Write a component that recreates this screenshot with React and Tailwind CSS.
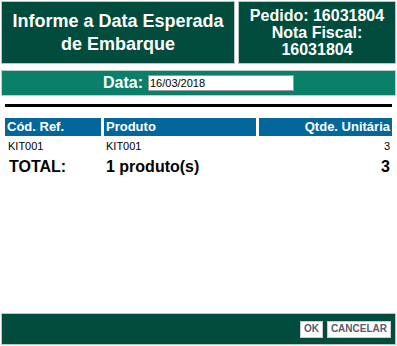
export default function App() {
  return (
    <div className="w-[397px] h-[346px] bg-white flex flex-col" style={{ fontFamily: '"Liberation Sans", Arial, sans-serif' }}>
      <div className="flex gap-[3px] px-[1px] pt-[1px]">
        <div className="w-[234px] h-[63px] bg-[#014c3c] border border-[#b9c7c2] flex items-center justify-center text-center text-white font-bold text-[18px] leading-[23px]">
          Informe a Data Esperada
          <br />
          de Embarque
        </div>
        <div className="flex-1 h-[63px] bg-[#014c3c] border border-[#b9c7c2] flex items-center justify-center text-center text-white font-bold text-[16px] leading-[17px]">
          Pedido: 16031804
          <br />
          Nota Fiscal:
          <br />
          16031804
        </div>
      </div>

      <div className="mt-[6px] mx-[1px] h-[26px] bg-[#0a806a] border border-[#b9d0c8] flex items-center justify-center gap-[5px]">
        <span className="text-white font-bold text-[16px]">Data:</span>
        <input
          defaultValue="16/03/2018"
          className="w-[146px] h-[16px] bg-white border border-[#999] px-[1px] text-[11px] text-black outline-none"
        />
      </div>

      <div className="mt-[8px] mx-[5px] h-[3px] bg-black" />

      <div className="mt-[11px] mx-[5px] flex gap-[3px] text-white font-bold text-[13px] h-[18px]">
        <div className="w-[96px] bg-[#04679b] px-[2px] flex items-center">Cód. Ref.</div>
        <div className="w-[152px] bg-[#04679b] px-[2px] flex items-center">Produto</div>
        <div className="flex-1 bg-[#04679b] px-[2px] flex items-center justify-end">Qtde. Unitária</div>
      </div>
      <div className="mx-[5px] flex gap-[3px] text-[11px] text-black h-[20px] items-center">
        <div className="w-[96px] px-[3px]">KIT001</div>
        <div className="w-[152px] px-[2px]">KIT001</div>
        <div className="flex-1 px-[2px] text-right">3</div>
      </div>
      <div className="mx-[5px] flex gap-[3px] text-[16px] font-bold text-black h-[22px] items-center">
        <div className="w-[96px] px-[4px]">TOTAL:</div>
        <div className="w-[152px] px-[2px]">1 produto(s)</div>
        <div className="flex-1 px-[2px] text-right">3</div>
      </div>

      <div className="flex-1" />

      <div className="mx-[1px] mb-[1px] h-[32px] bg-[#014c3c] border border-[#b9c7c2] flex items-center justify-end gap-[4px] pr-[4px]">
        <button className="h-[17px] px-[3px] bg-white border border-[#ccc] text-[10px] font-bold text-[#5a5a6e] leading-none">OK</button>
        <button className="h-[17px] px-[3px] bg-white border border-[#ccc] text-[10px] font-bold text-[#5a5a6e] leading-none">CANCELAR</button>
      </div>
    </div>
  );
}
